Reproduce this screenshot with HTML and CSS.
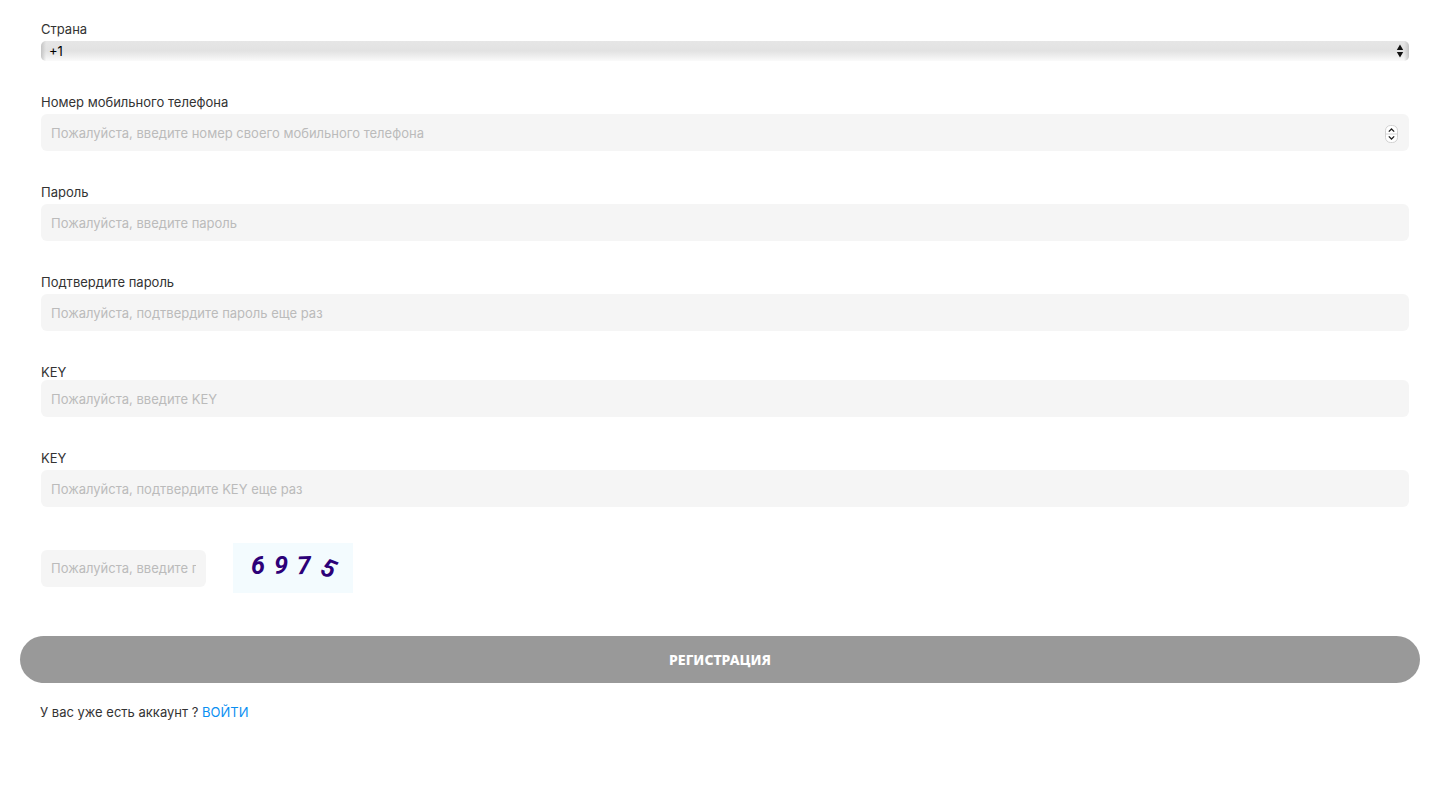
FILE: index.html
```html
<!DOCTYPE html>
<html lang="ru">
<head>
<meta charset="utf-8">
<meta name="viewport" content="width=device-width, initial-scale=1">
<title>Регистрация</title>
<link rel="stylesheet" href="styles.css">
</head>
<body>
<form class="register">
  <div class="fields">
    <div class="field">
      <label for="country">Страна</label>
      <div class="control">
        <select id="country" class="select"><option>+1</option></select>
        <svg class="select-arrows" width="8" height="14" viewBox="0 0 8 14" aria-hidden="true"><path d="M4 0.5 7.2 6H.8zM4 13.5.8 8h6.4z" fill="#111"/></svg>
      </div>
    </div>
    <div class="field">
      <label for="phone">Номер мобильного телефона</label>
      <div class="control">
        <input id="phone" class="input" type="number" placeholder="Пожалуйста, введите номер своего мобильного телефона">
        <svg class="stepper" width="15" height="20" viewBox="0 0 15 20" aria-hidden="true">
          <rect x="1.5" y="1.5" width="12" height="17" rx="5" fill="#fff" stroke="#d2d2d2"/>
          <path d="M2 10h11" stroke="#d6d6d6"/>
          <path d="M4.8 7.6 7.5 5l2.7 2.6M4.8 12.4 7.5 15l2.7-2.6" fill="none" stroke="#222" stroke-width="1.3"/>
        </svg>
      </div>
    </div>
    <div class="field">
      <label for="password">Пароль</label>
      <input id="password" class="input" type="password" placeholder="Пожалуйста, введите пароль">
    </div>
    <div class="field">
      <label for="password2">Подтвердите пароль</label>
      <input id="password2" class="input" type="password" placeholder="Пожалуйста, подтвердите пароль еще раз">
    </div>
    <div class="field field-tight">
      <label for="key">KEY</label>
      <input id="key" class="input" type="password" placeholder="Пожалуйста, введите KEY">
    </div>
    <div class="field">
      <label for="key2">KEY</label>
      <input id="key2" class="input" type="password" placeholder="Пожалуйста, подтвердите KEY еще раз">
    </div>
  </div>
  <div class="captcha">
    <input class="input captcha-input" type="text" aria-label="Проверочный код" placeholder="Пожалуйста, введите проверочный код">
    <svg class="captcha-image" width="120" height="50" viewBox="0 0 120 50">
      <rect width="120" height="50" fill="#f3fbfe"/>
      <g class="captcha-digits">
        <text x="18" y="31">6</text>
        <text x="41" y="31" transform="rotate(3 48 22)">9</text>
        <text x="64" y="31" transform="rotate(-2 71 22)">7</text>
        <text x="88" y="34" transform="rotate(22 95 27)">5</text>
      </g>
    </svg>
  </div>
  <button class="submit" type="submit">РЕГИСТРАЦИЯ</button>
  <p class="login">У вас уже есть аккаунт ? <a href="#login">ВОЙТИ</a></p>
</form>
</body>
</html>
```
FILE: styles.css
```css
* {
  box-sizing: border-box;
}

body {
  margin: 0;
  background: #fff;
  color: #333;
  font: 13px/16px Inter, "Noto Sans", sans-serif;
}

.register {
  padding: 21px 20px;
}

.fields {
  display: grid;
  gap: 33px;
  padding: 0 11px 0 21px;
}

.field {
  display: flex;
  flex-direction: column;
  gap: 4px;
}

.field-tight {
  gap: 0;
}

.control {
  display: grid;
  position: relative;
}

.input,
.select {
  width: 100%;
  margin: 0;
  border: 0;
  outline: 0;
  font: inherit;
  appearance: none;
}

.input {
  height: 37px;
  padding: 0 10px;
  border-radius: 6px;
  background: #f5f5f5;
  color: #333;
}

.input::placeholder {
  color: #bbb;
  opacity: 1;
}

.input[type="number"] {
  appearance: textfield;
}

.select {
  height: 20px;
  padding: 0 8px;
  border-radius: 5px;
  background:
    linear-gradient(to right, #c4c4c4, transparent 5px calc(100% - 5px), #c4c4c4),
    linear-gradient(#e6e6e6, #e2e2e2 50%, #fafafa);
  color: #000;
}

.select-arrows,
.stepper {
  position: absolute;
  pointer-events: none;
}

.select-arrows {
  top: 3px;
  right: 5px;
}

.stepper {
  top: 10px;
  right: 10px;
}

.captcha {
  display: flex;
  align-items: center;
  gap: 27px;
  margin: 36px 0 43px;
  padding: 0 21px;
}

.captcha-input {
  width: 165px;
}

.captcha-digits {
  fill: #2c0078;
  font: italic bold 25px Roboto, "Liberation Sans", sans-serif;
}

.submit {
  display: block;
  width: 100%;
  height: 47px;
  border: 0;
  border-radius: 24px;
  background: #999;
  color: #fff;
  font: 800 14px/16px "Noto Sans", sans-serif;
}

.login {
  margin: 21px 20px 0;
}

.login a {
  color: #0a8ff2;
  text-decoration: none;
}
```
